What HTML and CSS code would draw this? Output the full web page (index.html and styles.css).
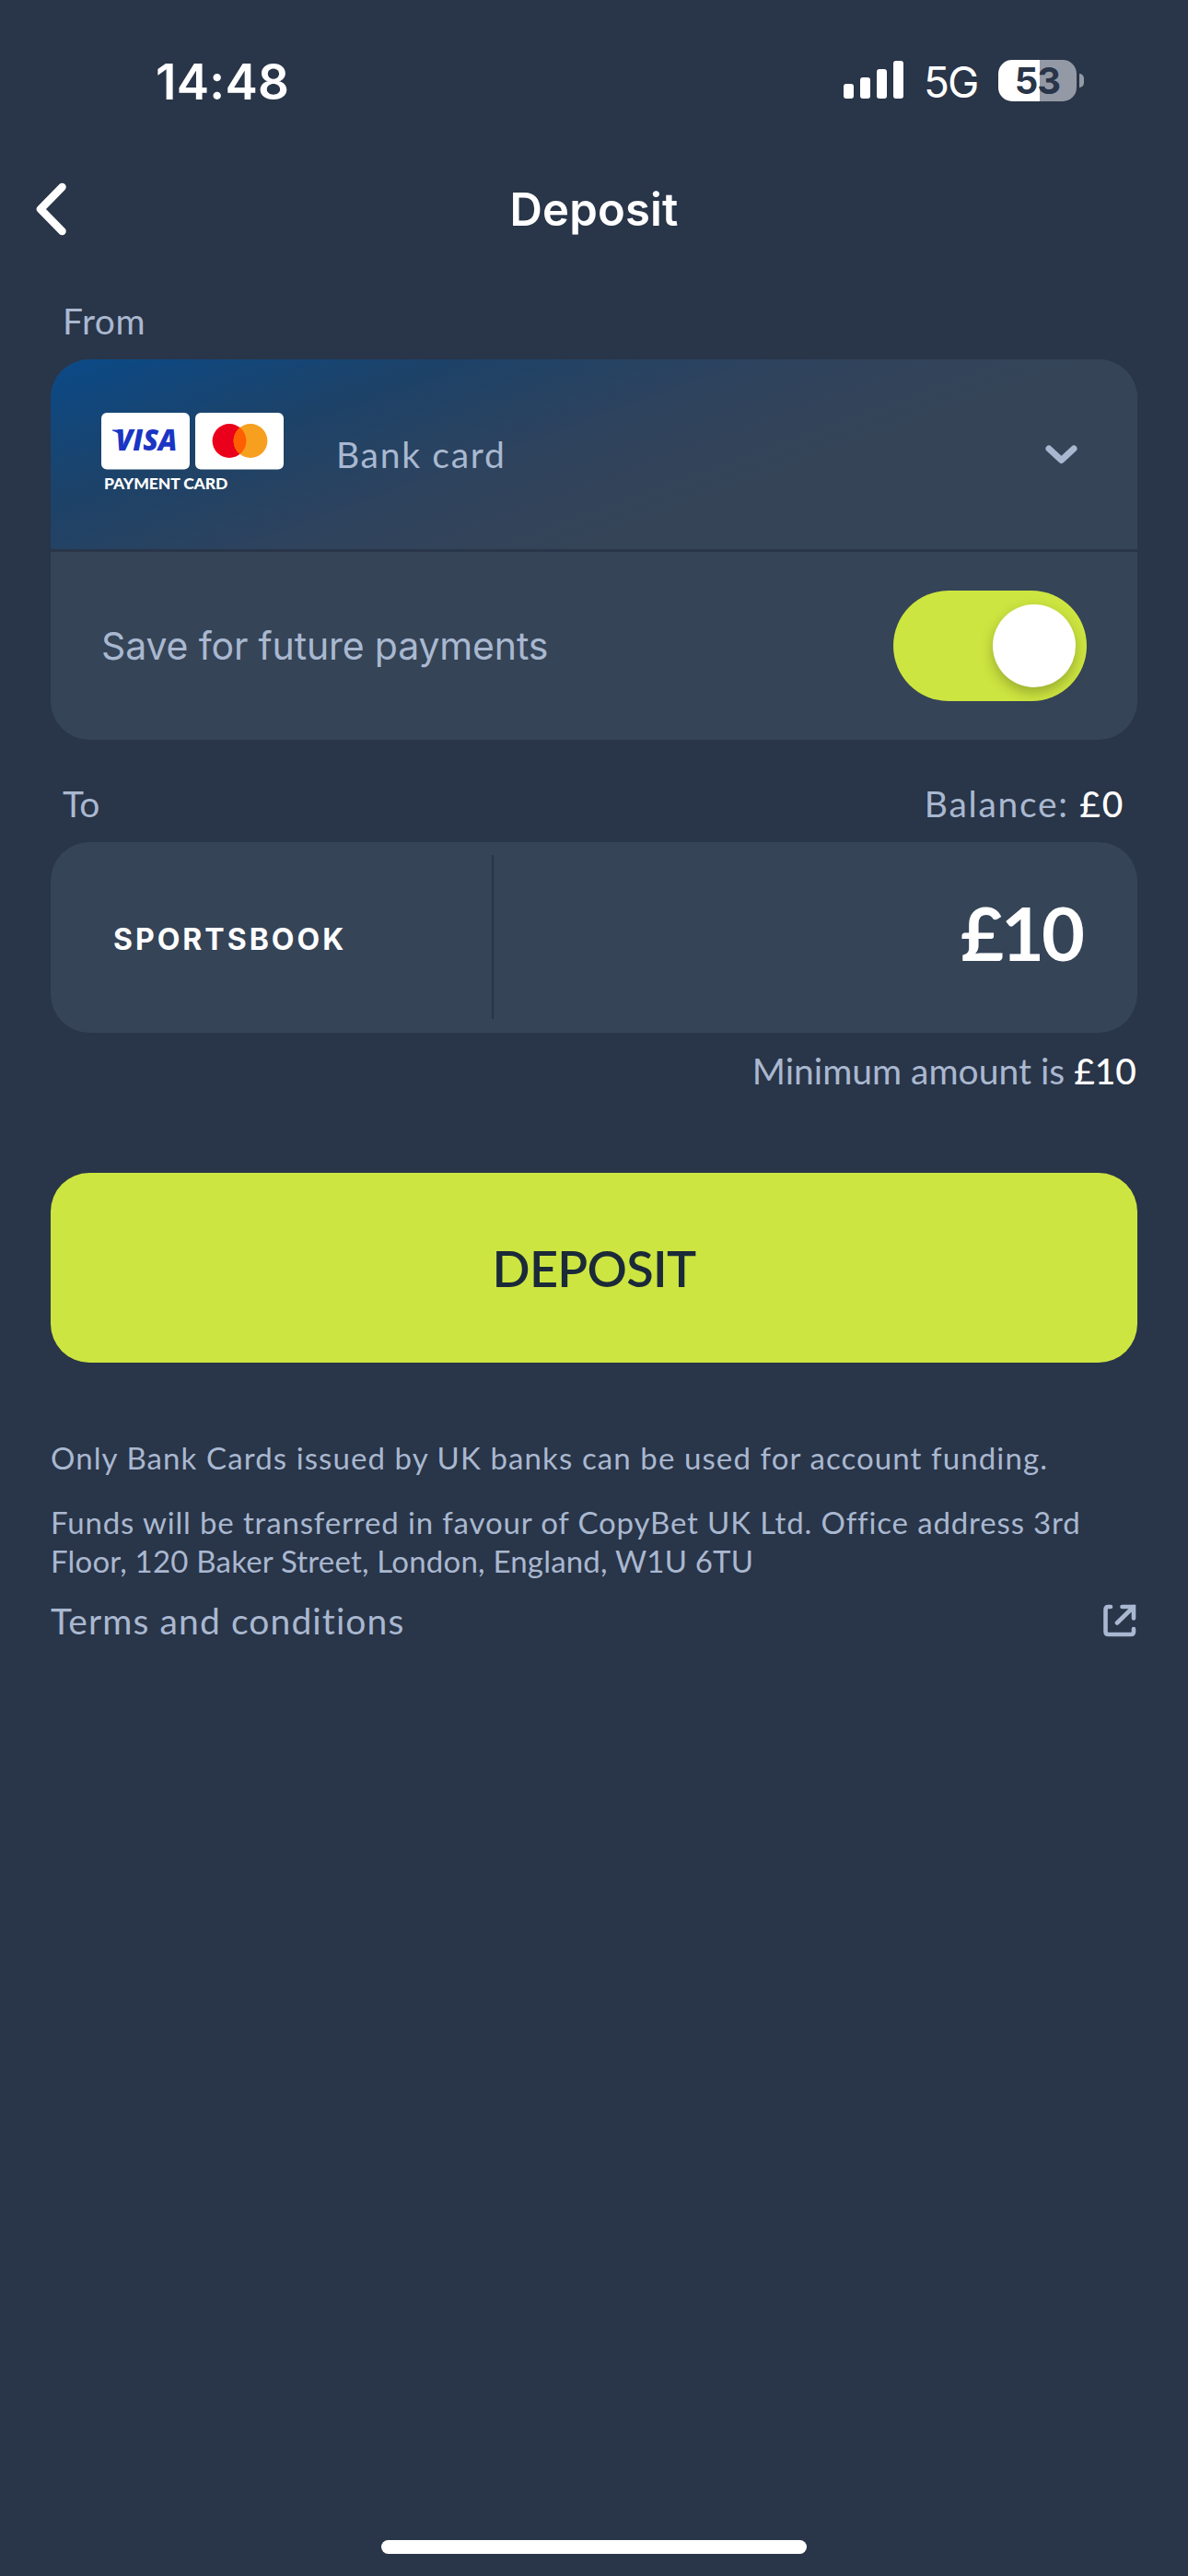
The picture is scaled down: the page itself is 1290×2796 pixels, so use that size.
FILE: index.html
```html
<!DOCTYPE html>
<html lang="en">
<head>
  <meta charset="UTF-8" />
  <meta name="viewport" content="width=device-width, initial-scale=1.0" />
  <title>Deposit</title>
  <link rel="stylesheet" href="styles.css">
</head>
<body>
  <div class="status-bar">
    <span class="time">14:48</span>
    <div class="status-icons">
      <svg class="signal" width="65" height="42" viewBox="0 0 65 42" fill="#fff">
        <rect x="0" y="25" width="11" height="16" rx="3"/>
        <rect x="18" y="18" width="11" height="23" rx="3"/>
        <rect x="36" y="9" width="11" height="32" rx="3"/>
        <rect x="54" y="0" width="11" height="41" rx="3"/>
      </svg>
      <span class="network">5G</span>
      <div class="battery"><span>53</span></div>
      <i class="battery-tip"></i>
    </div>
  </div>

  <header class="header">
    <svg class="back" width="33" height="58" viewBox="0 0 33 58" fill="none" stroke="#fff" stroke-width="8.5" stroke-linecap="round" stroke-linejoin="round">
      <path d="M28.5 5 5 29l23.500 24"/>
    </svg>
    <h1>Deposit</h1>
  </header>

  <main>
    <div class="label-row label-from"><span>From</span></div>

    <section class="card">
      <div class="method">
        <div class="logos">
          <svg width="198" height="62" viewBox="0 0 198 62">
            <rect width="96" height="61.500" rx="6" fill="#fff"/>
            <path d="M12 18.500h9l3 6-3 1c-2-3-5-5-9-6z" fill="#1a35c4"/>
            <text class="visa" x="15.500" y="41" textLength="67" lengthAdjust="spacingAndGlyphs">VISA</text>
            <rect x="102" width="96" height="61.500" rx="6" fill="#fff"/>
            <circle cx="139" cy="30.500" r="18.400" fill="#eb001b"/>
            <circle cx="162" cy="30.500" r="18.400" fill="#f79f1f"/>
            <path d="M150.500 16.100a18.400 18.400 0 0 1 0 28.800 18.400 18.400 0 0 1 0-28.800z" fill="#ff5f00"/>
          </svg>
          <span class="payment-card">PAYMENT CARD</span>
        </div>
        <span class="method-name">Bank card</span>
        <svg class="chevron" width="35" height="21" viewBox="0 0 35 21" fill="none" stroke="#a9b8d0" stroke-width="7" stroke-linecap="round" stroke-linejoin="round">
          <path d="M4 4l13.500 12.500L31 4"/>
        </svg>
      </div>
      <div class="save">
        <span class="save-text">Save for future payments</span>
        <div class="toggle"><i></i></div>
      </div>
    </section>

    <div class="label-row label-to">
      <span>To</span>
      <span class="balance">Balance: <b>£0</b></span>
    </div>

    <section class="card amount">
      <div class="wallet">SPORTSBOOK</div>
      <div class="sum">£10</div>
    </section>
    <p class="minimum">Minimum amount is <b>£10</b></p>

    <button class="deposit">DEPOSIT</button>

    <p class="note note-cards">Only Bank Cards issued by UK banks can be used for account funding.</p>
    <p class="note note-funds">Funds will be transferred in favour of CopyBet UK Ltd. Office address 3rd<br><span class="address">Floor, 120 Baker Street, London, England, W1U 6TU</span></p>

    <a class="terms">
      <span>Terms and conditions</span>
      <svg width="36" height="36" viewBox="0 0 36 36" fill="none" stroke="#a9b8d0" stroke-width="4.600" stroke-linecap="round" stroke-linejoin="round">
        <path d="M8 3H5.500Q2.500 3 2.500 6v24q0 3 3 3h24.500q3 0 3-3v-3"/>
        <path d="M20.500 3H33v12.500M33 3 15 20.500" stroke-linejoin="miter"/>
      </svg>
    </a>
  </main>

  <div class="home-indicator"></div>
</body>
</html>
```
FILE: styles.css
```css
* {
  box-sizing: border-box;
}
body {
  margin: 0;
  height: 2796px;
  display: flex;
  flex-direction: column;
  background: #293548;
  color: #a9b8d0;
  font-family: Lato, "Liberation Sans", sans-serif;
  font-size: 39px;
}
h1, p {
  margin: 0;
}
b {
  color: #fff;
  font-weight: 500;
}

.status-bar {
  height: 176px;
  padding: 0 113px 0 169px;
  display: flex;
  justify-content: space-between;
  color: #fff;
  font-family: Inter, sans-serif;
}
.time {
  margin-top: 57px;
  font-size: 53px;
  line-height: 64px;
  font-weight: 600;
  letter-spacing: 0.3px;
}
.status-icons {
  display: flex;
  height: 46px;
  margin-top: 64px;
  align-items: center;
}
.network {
  margin-left: 22px;
  width: 60px;
  font-size: 46px;
  letter-spacing: -2px;
  line-height: 46px;
  padding-top: 4px;
}
.battery {
  width: 85px;
  height: 45px;
  margin-left: 21px;
  border-radius: 15px;
  background: linear-gradient(90deg, #fff 45px, #949aa5 45px);
  color: #293548;
  font-size: 40px;
  line-height: 45px;
  font-weight: 700;
  letter-spacing: -1px;
  text-align: center;
}
.battery-tip {
  width: 5px;
  height: 15px;
  margin-left: 3px;
  border-radius: 0 5px 5px 0;
  background: #949aa5;
}

.header {
  height: 102px;
  padding-left: 39px;
  padding-right: 72px;
  display: flex;
  align-items: center;
}
.header h1 {
  flex: 1;
  color: #fff;
  font-family: Inter, sans-serif;
  font-size: 49px;
  font-weight: 600;
  letter-spacing: 0.2px;
  text-align: center;
}

main {
  padding: 0 55px;
}
.label-row {
  padding: 0 16px 0 13px;
  display: flex;
  justify-content: space-between;
  line-height: 48px;
}
.label-from {
  padding-top: 46px;
  height: 112px;
  letter-spacing: 0.5px;
}
.label-to {
  padding-top: 45px;
  height: 111px;
}
.balance {
  letter-spacing: 1.7px;
  margin-right: -2px;
}

.card {
  border-radius: 42px;
  background: #354457;
  overflow: hidden;
}
.method {
  height: 206px;
  padding: 0 65px 0 55px;
  display: flex;
  align-items: center;
  background: linear-gradient(160deg, #0a4a88 0%, #1d4268 25%, #2f435d 47%, #354457 65%);
}
.logos {
  display: flex;
  flex-direction: column;
  width: 198px;
  margin-top: -3px;
}
.visa {
  font-family: "Open Sans", sans-serif;
  font-size: 31px;
  font-weight: 800;
  font-style: italic;
  fill: #1a35c4;
}
.payment-card {
  margin: 5px 0 0 3px;
  color: #fff;
  font-size: 17.5px;
  line-height: 20px;
  font-weight: 900;
  letter-spacing: -0.1px;
  white-space: nowrap;
}
.method-name {
  margin-left: 57px;
  letter-spacing: 1.7px;
}
.chevron {
  margin-left: auto;
}
.save {
  height: 207px;
  padding: 0 55px;
  border-top: 3px solid #293548;
  display: flex;
  align-items: center;
  justify-content: space-between;
}
.save-text {
  font-family: Inter, sans-serif;
  font-size: 41px;
  letter-spacing: -0.15px;
}
.toggle {
  width: 210px;
  height: 120px;
  padding: 15px 12px;
  border-radius: 60px;
  background: #cde540;
  display: flex;
  justify-content: flex-end;
}
.toggle i {
  width: 90px;
  height: 90px;
  border-radius: 50%;
  background: #fff;
  box-shadow: 0 6px 14px rgba(0, 0, 0, 0.25);
}

.amount {
  height: 207px;
  padding: 14px 60px 15px 68px;
  display: flex;
}
.wallet {
  width: 413px;
  border-right: 2px solid #293548;
  color: #fff;
  font-family: Inter, sans-serif;
  font-size: 32px;
  font-weight: 700;
  letter-spacing: 3px;
  line-height: 183px;
}
.sum {
  flex: 1;
  color: #fff;
  font-size: 81px;
  font-weight: 700;
  line-height: 167px;
  letter-spacing: -3px;
  text-align: right;
}
.minimum {
  margin-top: 17px;
  padding-right: 1px;
  line-height: 48px;
  text-align: right;
}

.deposit {
  display: block;
  width: 100%;
  height: 206px;
  margin-top: 87px;
  border: 0;
  border-radius: 42px;
  background: #cde540;
  color: #1b2a38;
  font-family: inherit;
  font-size: 54px;
  font-weight: 600;
  letter-spacing: -0.7px;
}

.note {
  font-size: 33px;
  line-height: 42px;
  white-space: nowrap;
}
.note-cards {
  margin-top: 82px;
  letter-spacing: 1.1px;
}
.note-funds {
  margin-top: 28px;
  letter-spacing: 0.85px;
}
.address {
  letter-spacing: 0.2px;
}
.terms {
  margin-top: 19px;
  padding-right: 1px;
  height: 50px;
  display: flex;
  align-items: center;
  justify-content: space-between;
  letter-spacing: 1.1px;
}

.home-indicator {
  width: 462px;
  height: 15px;
  margin: auto auto 24px;
  border-radius: 8px;
  background: #fff;
}
```
